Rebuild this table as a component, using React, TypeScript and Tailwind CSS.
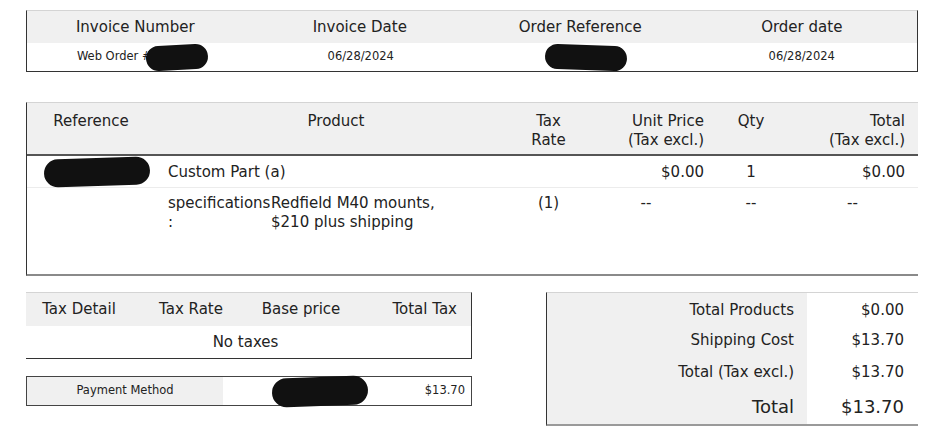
const font = { fontFamily: '"DejaVu Sans", Verdana, sans-serif' };

function Blob({ className }: { className: string }) {
  return <span className={`inline-block rounded-full bg-[#111] ${className}`} />;
}

export default function App() {
  return (
    <div className="w-[947px] h-[444px] bg-white text-[#222] overflow-hidden" style={font}>
      {/* invoice header table */}
      <div className="ml-[26px] mt-[10px] w-[892px] border-t border-t-[#d4d4d4] border-l border-r border-b border-l-[#333] border-r-[#333] border-b-[#333]">
        <div className="grid grid-cols-4 h-[32px] bg-[#f0f0f0] text-[15px] items-center text-center pt-[1px]">
          <div className="pr-[6px]">Invoice Number</div>
          <div className="pr-[2px]">Invoice Date</div>
          <div className="pr-[6px]">Order Reference</div>
          <div className="pr-[8px]">Order date</div>
        </div>
        <div className="grid grid-cols-4 h-[28px] text-[11.5px] items-center text-center">
          <div className="flex items-center justify-center pl-[8px]">
            <span>Web Order #</span>
            <Blob className="w-[62px] h-[25px] -ml-[6px] -rotate-3" />
          </div>
          <div>06/28/2024</div>
          <div className="flex justify-center pl-[6px]">
            <Blob className="w-[82px] h-[25px] rotate-2" />
          </div>
          <div className="pr-[8px]">06/28/2024</div>
        </div>
      </div>

      {/* products table */}
      <div className="ml-[26px] mt-[30px] w-[892px] border-t border-t-[#d4d4d4] border-l border-l-[#333] border-b-2 border-b-[#8a8a8a] text-[15px] leading-[19px]">
        <div className="grid grid-cols-[134px_350px_75px_130px_70px_133px] h-[53px] bg-[#f0f0f0] border-b-2 border-b-[#555] pt-[9px]">
          <div className="text-center pr-[6px]">Reference</div>
          <div className="text-center">Product</div>
          <div className="text-center">
            Tax
            <br />
            Rate
          </div>
          <div className="text-right pr-[12px]">
            Unit Price
            <br />
            (Tax excl.)
          </div>
          <div className="text-center">Qty</div>
          <div className="text-right pr-[14px]">
            Total
            <br />
            (Tax excl.)
          </div>
        </div>
        <div className="grid grid-cols-[134px_350px_75px_130px_70px_133px] h-[32px] items-center border-b border-b-[#ececec] pt-[1px]">
          <div className="flex justify-center pl-[6px]">
            <Blob className="w-[106px] h-[28px] -rotate-2" />
          </div>
          <div className="pl-[7px]">Custom Part (a)</div>
          <div />
          <div className="text-right pr-[12px]">$0.00</div>
          <div className="text-center">1</div>
          <div className="text-right pr-[14px]">$0.00</div>
        </div>
        <div className="grid grid-cols-[134px_350px_75px_130px_70px_133px] h-[86px] pt-[6px]">
          <div />
          <div className="pl-[7px] flex">
            <div className="w-[103px]">
              specifications
              <br />:
            </div>
            <div>
              Redfield M40 mounts,
              <br />
              $210 plus shipping
            </div>
          </div>
          <div className="text-center">(1)</div>
          <div className="text-center pr-[10px]">--</div>
          <div className="text-center">--</div>
          <div className="text-center">--</div>
        </div>
      </div>

      {/* bottom */}
      <div className="flex mt-[16px] ml-[26px] w-[892px]">
        <div className="w-[446px]">
          <div className="border-t border-t-[#d4d4d4] border-r border-r-[#333] border-b border-b-[#333] text-[15px]">
            <div className="grid grid-cols-[106px_118px_102px_1fr] h-[33px] items-center bg-[#f0f0f0]">
              <div className="text-center">Tax Detail</div>
              <div className="text-center">Tax Rate</div>
              <div className="text-center">Base price</div>
              <div className="text-right pr-[14px]">Total Tax</div>
            </div>
            <div className="h-[32px] flex items-center justify-center pr-[6px]">No taxes</div>
          </div>
          <div className="mt-[17px] h-[30px] flex items-center border border-[#444] text-[11.5px]">
            <div className="w-[196px] h-full bg-[#f0f0f0] flex items-center justify-center">Payment Method</div>
            <div className="flex-1 flex justify-center pr-[8px]">
              <Blob className="w-[96px] h-[29px] -rotate-2" />
            </div>
            <div className="pr-[6px]">$13.70</div>
          </div>
        </div>
        <div className="ml-auto w-[372px] border-t border-t-[#d4d4d4] border-l border-l-[#333] border-b-2 border-b-[#9a9a9a] text-[15px]">
          <div className="grid grid-cols-[260px_1fr]">
            <div className="bg-[#f0f0f0] text-right pr-[13px]">
              <div className="h-[32px] flex items-center justify-end pt-[2px]">Total Products</div>
              <div className="h-[31px] flex items-center justify-end">Shipping Cost</div>
              <div className="h-[32px] flex items-center justify-end">Total (Tax excl.)</div>
              <div className="h-[36px] flex items-center justify-end text-[18px]">Total</div>
            </div>
            <div className="text-right pr-[14px]">
              <div className="h-[32px] flex items-center justify-end pt-[2px]">$0.00</div>
              <div className="h-[31px] flex items-center justify-end">$13.70</div>
              <div className="h-[32px] flex items-center justify-end">$13.70</div>
              <div className="h-[36px] flex items-center justify-end text-[18px]">$13.70</div>
            </div>
          </div>
        </div>
      </div>
    </div>
  );
}
